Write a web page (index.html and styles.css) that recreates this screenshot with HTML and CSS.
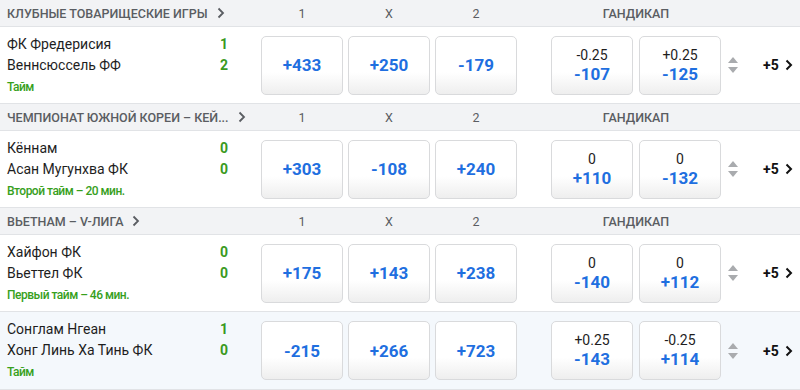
FILE: index.html
```html
<!DOCTYPE html>
<html lang="ru">
<head>
<meta charset="utf-8">
<link rel="stylesheet" href="styles.css">
</head>
<body>
<div class="board">

  <section class="league">
    <div class="head">
      <div class="title"><span class="name">Клубные товарищеские игры</span><svg class="chev" viewBox="0 0 8 12" width="8" height="12"><polyline points="1.5,1.5 6,6 1.5,10.5"/></svg></div>
      <div class="cols"><span>1</span><span>X</span><span>2</span></div>
      <div class="hcap">Гандикап</div>
    </div>
    <div class="event">
      <div class="info">
        <div class="team"><span>ФК Фредерисия</span><b>1</b></div>
        <div class="team"><span>Веннсюссель ФФ</span><b>2</b></div>
        <div class="status">Тайм</div>
      </div>
      <div class="odds"><button class="btn">+433</button><button class="btn">+250</button><button class="btn">-179</button></div>
      <div class="hodds"><button class="btn hb"><span class="line">-0.25</span><span class="v">-107</span></button><button class="btn hb"><span class="line">+0.25</span><span class="v">-125</span></button></div>
      <div class="sort"><i class="up"></i><i class="dn"></i></div>
      <div class="more">+5<svg viewBox="0 0 8 12" width="8" height="12"><polyline points="1.5,1.5 6,6 1.5,10.5"/></svg></div>
    </div>
  </section>

  <section class="league">
    <div class="head">
      <div class="title"><span class="name">Чемпионат Южной Кореи – Кей...</span><svg class="chev" viewBox="0 0 8 12" width="8" height="12"><polyline points="1.5,1.5 6,6 1.5,10.5"/></svg></div>
      <div class="cols"><span>1</span><span>X</span><span>2</span></div>
      <div class="hcap">Гандикап</div>
    </div>
    <div class="event">
      <div class="info">
        <div class="team"><span>Кённам</span><b>0</b></div>
        <div class="team"><span>Асан Мугунхва ФК</span><b>0</b></div>
        <div class="status">Второй тайм – 20 мин.</div>
      </div>
      <div class="odds"><button class="btn">+303</button><button class="btn">-108</button><button class="btn">+240</button></div>
      <div class="hodds"><button class="btn hb"><span class="line">0</span><span class="v">+110</span></button><button class="btn hb"><span class="line">0</span><span class="v">-132</span></button></div>
      <div class="sort"><i class="up"></i><i class="dn"></i></div>
      <div class="more">+5<svg viewBox="0 0 8 12" width="8" height="12"><polyline points="1.5,1.5 6,6 1.5,10.5"/></svg></div>
    </div>
  </section>

  <section class="league">
    <div class="head">
      <div class="title"><span class="name">Вьетнам – V-лига</span><svg class="chev" viewBox="0 0 8 12" width="8" height="12"><polyline points="1.5,1.5 6,6 1.5,10.5"/></svg></div>
      <div class="cols"><span>1</span><span>X</span><span>2</span></div>
      <div class="hcap">Гандикап</div>
    </div>
    <div class="event">
      <div class="info">
        <div class="team"><span>Хайфон ФК</span><b>0</b></div>
        <div class="team"><span>Вьеттел ФК</span><b>0</b></div>
        <div class="status">Первый тайм – 46 мин.</div>
      </div>
      <div class="odds"><button class="btn">+175</button><button class="btn">+143</button><button class="btn">+238</button></div>
      <div class="hodds"><button class="btn hb"><span class="line">0</span><span class="v">-140</span></button><button class="btn hb"><span class="line">0</span><span class="v">+112</span></button></div>
      <div class="sort"><i class="up"></i><i class="dn"></i></div>
      <div class="more">+5<svg viewBox="0 0 8 12" width="8" height="12"><polyline points="1.5,1.5 6,6 1.5,10.5"/></svg></div>
    </div>
    <div class="event active">
      <div class="info">
        <div class="team"><span>Сонглам Нгеан</span><b>1</b></div>
        <div class="team"><span>Хонг Линь Ха Тинь ФК</span><b>0</b></div>
        <div class="status">Тайм</div>
      </div>
      <div class="odds"><button class="btn">-215</button><button class="btn">+266</button><button class="btn">+723</button></div>
      <div class="hodds"><button class="btn hb"><span class="line">+0.25</span><span class="v">-143</span></button><button class="btn hb"><span class="line">-0.25</span><span class="v">+114</span></button></div>
      <div class="sort"><i class="up"></i><i class="dn"></i></div>
      <div class="more">+5<svg viewBox="0 0 8 12" width="8" height="12"><polyline points="1.5,1.5 6,6 1.5,10.5"/></svg></div>
    </div>
  </section>

</div>
</body>
</html>
```

FILE: styles.css
```css
* { box-sizing: border-box; }
html, body { margin: 0; padding: 0; background: #fff; }
body { font-family: Roboto, "Noto Sans", "Liberation Sans", sans-serif; color: #1e1e1e; width: 800px; height: 390px; overflow: hidden; }

.head {
  display: flex;
  align-items: center;
  height: 27px;
  background: #f2f3f5;
  border-bottom: 1px solid #e1e3e6;
  color: #5a5d62;
  font-size: 12px;
}
.title {
  width: 261px;
  padding-left: 7px;
  display: flex;
  align-items: center;
  gap: 9px;
  font-weight: 500;
  text-transform: uppercase;
  font-size: 12.5px;
}
.title .name {
  white-space: nowrap;
}
.chev { flex: none; }
.chev polyline { fill: none; stroke: #5a5d62; stroke-width: 1.8; }

.cols { display: flex; gap: 5px; font-size: 12.5px; }
.cols span { width: 82px; text-align: center; }
.hcap {
  margin-left: 34px;
  width: 170px;
  text-align: center;
  font-weight: 500;
  text-transform: uppercase;
  font-size: 12.5px;
}

.event {
  display: flex;
  align-items: center;
  height: 77px;
  border-bottom: 1px solid #e1e3e6;
  background: #fff;
}
.event.active { background: #f4f8fc; height: 78px; }

.info {
  width: 261px;
  padding: 7px 33px 0 7px;
  align-self: flex-start;
}
.team {
  display: flex;
  justify-content: space-between;
  font-size: 14px;
  line-height: 21px;
  color: #1e1e1e;
}
.team b { color: #3a9a1f; font-weight: 700; font-size: 14px; }
.status {
  margin-top: 1px;
  font-size: 12px;
  line-height: 21px;
  color: #37a01c;
  font-weight: 500;
  letter-spacing: -0.5px;
}

.odds, .hodds { display: flex; gap: 5px; }
.hodds { margin-left: 34px; gap: 6px; }

.btn {
  width: 82px;
  height: 59px;
  border: 1px solid #d9dadc;
  border-radius: 5px;
  background: linear-gradient(#ffffff 0%, #ffffff 62%, #eeeeee 100%);
  font-family: inherit;
  font-size: 17px;
  font-weight: 700;
  color: #1f6fe0;
  padding: 0;
  display: flex;
  flex-direction: column;
  align-items: center;
  justify-content: center;
}
.hb .line { font-size: 14px; font-weight: 400; color: #1e1e1e; line-height: 18px; }
.hb .v { font-size: 17px; line-height: 21px; }

.sort {
  margin-left: 7px;
  width: 10px;
  display: flex;
  flex-direction: column;
  gap: 4px;
}
.sort i { display: block; width: 0; height: 0; border-left: 5px solid transparent; border-right: 5px solid transparent; }
.sort .up { border-bottom: 6px solid #a9abae; }
.sort .dn { border-top: 6px solid #a9abae; }

.more {
  margin-left: 25px;
  display: flex;
  align-items: center;
  gap: 6px;
  font-size: 14px;
  font-weight: 700;
  color: #111;
}
.more polyline { fill: none; stroke: #111; stroke-width: 2; }
```
